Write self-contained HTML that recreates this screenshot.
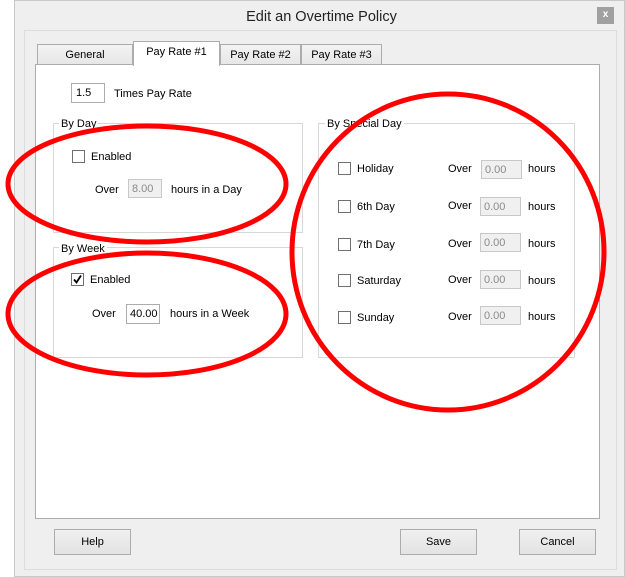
<!DOCTYPE html>
<html><head><style>
*{margin:0;padding:0;box-sizing:border-box}
body{width:625px;height:577px;background:#fff;font-family:"Liberation Sans",sans-serif;font-size:11px;color:#000;position:relative;overflow:hidden}
.a{position:absolute}
.t{position:absolute;white-space:nowrap;line-height:13px;margin-top:1px}
.cb{position:absolute;width:13px;height:13px;border:1px solid #707070;background:#fff}
.in{position:absolute;border:1px solid #c8c8c8;background:#f0f0f0;color:#8a8a8a;padding-left:3px;line-height:18px}
.grp{position:absolute;border:1px solid #d8d8d8}
.lg{position:absolute;background:#fff;padding:0 2px;line-height:12px;margin-top:1px}
.tab{position:absolute;border:1px solid #acacac;border-bottom:none;background:linear-gradient(#f3f3f3,#e6e6e6);text-align:center;line-height:20px}
.btn{position:absolute;top:529px;height:26px;border:1px solid #acacac;background:linear-gradient(#f0f0f0,#e3e3e3);text-align:center;line-height:25px}
</style></head><body>
<div class="a" style="left:14px;top:0;width:611px;height:577px;background:#efefef;border:1px solid #c9c9c9"></div>
<div class="t" style="left:0;width:643px;top:8px;text-align:center;font-size:14.5px;line-height:17px;color:#222">Edit an Overtime Policy</div>
<div class="a" style="left:597px;top:7px;width:17px;height:17px;background:#a0a0a0;color:#fff;font-size:10px;text-align:center;line-height:16px;font-weight:bold">x</div>
<div class="a" style="left:24px;top:30px;width:593px;height:540px;border:1px solid #dcdcdc;background:#efefef"></div>
<div class="tab" style="left:37px;top:44px;width:96px;height:21px">General</div>
<div class="tab" style="left:220px;top:44px;width:81px;height:21px">Pay Rate #2</div>
<div class="tab" style="left:301px;top:44px;width:81px;height:21px">Pay Rate #3</div>
<div class="a" style="left:35px;top:64px;width:565px;height:455px;border:1px solid #acacac;background:#fff"></div>
<div class="tab" style="left:133px;top:41px;width:87px;height:25px;background:#fff;line-height:20px">Pay Rate #1</div>
<div class="a" style="left:71px;top:83px;width:34px;height:20px;border:1px solid #acacac;line-height:19px;padding-left:4px">1.5</div>
<div class="t" style="left:114px;top:87px">Times Pay Rate</div>

<div class="grp" style="left:53px;top:123px;width:250px;height:110px"></div>
<div class="lg" style="left:59px;top:117px">By Day</div>
<div class="cb" style="left:72px;top:150px"></div>
<div class="t" style="left:91px;top:150px">Enabled</div>
<div class="t" style="left:95px;top:183px">Over</div>
<div class="in" style="left:128px;top:179px;width:34px;height:19px">8.00</div>
<div class="t" style="left:171px;top:183px">hours in a Day</div>

<div class="grp" style="left:53px;top:247px;width:250px;height:111px"></div>
<div class="lg" style="left:59px;top:242px">By Week</div>
<div class="cb" style="left:71px;top:273px"><svg width="11" height="11" style="position:absolute;left:0;top:0"><path d="M2 5.5 L4.5 8.5 L9 1.5" fill="none" stroke="#000" stroke-width="1.8"/></svg></div>
<div class="t" style="left:90px;top:273px">Enabled</div>
<div class="t" style="left:92px;top:307px">Over</div>
<div class="in" style="left:126px;top:304px;width:34px;height:20px;background:#fff;color:#000;border-color:#acacac">40.00</div>
<div class="t" style="left:170px;top:307px">hours in a Week</div>

<div class="grp" style="left:318px;top:123px;width:257px;height:235px"></div>
<div class="lg" style="left:325px;top:117px">By Special Day</div>

<div class="cb" style="left:338px;top:162px"></div><div class="t" style="left:357px;top:162px">Holiday</div><div class="t" style="left:448px;top:162px">Over</div><div class="in" style="left:481px;top:160px;width:41px;height:19px">0.00</div><div class="t" style="left:528px;top:162px">hours</div>
<div class="cb" style="left:338px;top:200px"></div><div class="t" style="left:357px;top:200px">6th Day</div><div class="t" style="left:448px;top:199px">Over</div><div class="in" style="left:480px;top:197px;width:41px;height:19px">0.00</div><div class="t" style="left:528px;top:200px">hours</div>
<div class="cb" style="left:338px;top:238px"></div><div class="t" style="left:357px;top:238px">7th Day</div><div class="t" style="left:448px;top:237px">Over</div><div class="in" style="left:480px;top:233px;width:41px;height:19px">0.00</div><div class="t" style="left:528px;top:237px">hours</div>
<div class="cb" style="left:338px;top:274px"></div><div class="t" style="left:357px;top:274px">Saturday</div><div class="t" style="left:448px;top:273px">Over</div><div class="in" style="left:480px;top:270px;width:41px;height:19px">0.00</div><div class="t" style="left:528px;top:274px">hours</div>
<div class="cb" style="left:338px;top:311px"></div><div class="t" style="left:357px;top:311px">Sunday</div><div class="t" style="left:448px;top:310px">Over</div><div class="in" style="left:480px;top:306px;width:41px;height:19px">0.00</div><div class="t" style="left:528px;top:310px">hours</div>

<div class="btn" style="left:54px;width:77px">Help</div>
<div class="btn" style="left:400px;width:77px">Save</div>
<div class="btn" style="left:519px;width:77px">Cancel</div>

<svg class="a" style="left:0;top:0" width="625" height="577">
<g fill="none" stroke="#f00" stroke-width="5">
<ellipse cx="147" cy="184" rx="139" ry="58"/>
<ellipse cx="147" cy="314" rx="139" ry="61"/>
<ellipse cx="448" cy="252" rx="156" ry="158"/>
</g></svg>
</body></html>
